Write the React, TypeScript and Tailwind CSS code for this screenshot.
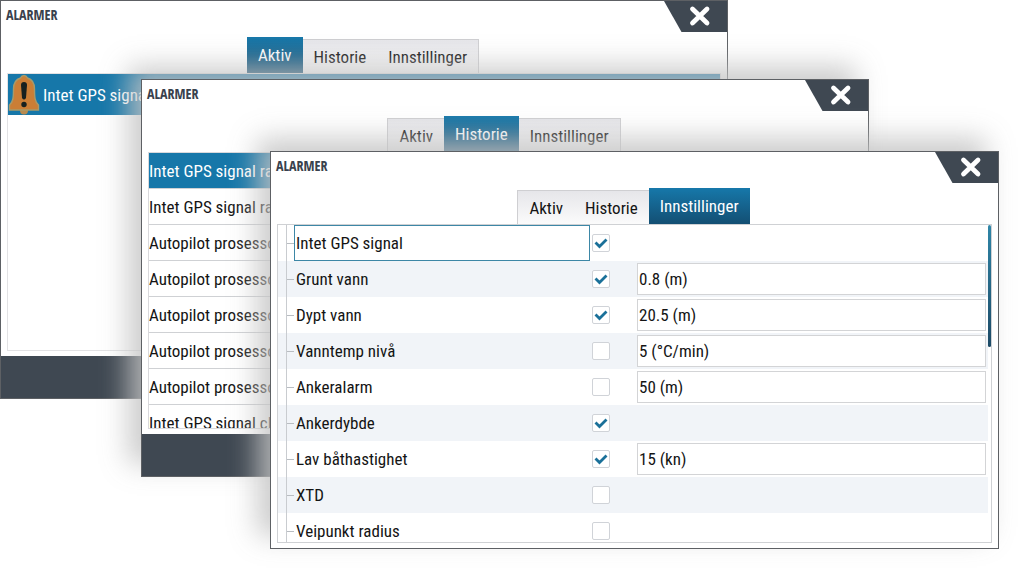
import { useId, useState, type ReactNode } from "react";

type TabName = "Aktiv" | "Historie" | "Innstillinger";
const TABS: TabName[] = ["Aktiv", "Historie", "Innstillinger"];

type Setting = { name: string; on: boolean; value?: string };

const SETTINGS: Setting[] = [
  { name: "Intet GPS signal", on: true },
  { name: "Grunt vann", on: true, value: "0.8 (m)" },
  { name: "Dypt vann", on: true, value: "20.5 (m)" },
  { name: "Vanntemp nivå", on: false, value: "5 (°C/min)" },
  { name: "Ankeralarm", on: false, value: "50 (m)" },
  { name: "Ankerdybde", on: true },
  { name: "Lav båthastighet", on: true, value: "15 (kn)" },
  { name: "XTD", on: false },
  { name: "Veipunkt radius", on: false },
];

const HISTORY = [
  "Intet GPS signal ra",
  "Intet GPS signal ra",
  "Autopilot prosesso",
  "Autopilot prosesso",
  "Autopilot prosesso",
  "Autopilot prosesso",
  "Autopilot prosesso",
  "Intet GPS signal cl",
];

function Tabs({ active }: { active: TabName }) {
  return (
    <div role="tablist" className="flex items-end justify-center pr-0.5">
      {TABS.map((tab) => (
        <button
          key={tab}
          type="button"
          role="tab"
          aria-selected={tab === active}
          className={
            tab === active
              ? "h-9 bg-linear-to-b from-[#1678aa] to-[#134f73] px-[11px] text-white"
              : "h-[34px] border-t border-[#cfcfd2] bg-linear-to-b from-[#e6e6ea] to-[#fbfbfb] px-[11px] first:border-l last:border-r"
          }
        >
          {tab}
        </button>
      ))}
    </div>
  );
}

function AlarmWindow({
  active,
  className,
  footer,
  children,
}: {
  active: TabName;
  className: string;
  footer?: boolean;
  children: ReactNode;
}) {
  return (
    <section className={`absolute border border-[#5d6064] bg-white ${className}`}>
      <header className="flex items-start justify-between pl-[5px]">
        <h2 className="pt-1.5 font-['Open_Sans_Condensed','Roboto_Condensed',sans-serif] text-[14px] leading-4 font-bold text-[#39414d]">
          ALARMER
        </h2>
        <button type="button" aria-label="Lukk" className="block">
          <svg width="63" height="31" viewBox="0 0 63 31" className="block">
            <path d="M0 0H63V31H17.500Z" fill="#3f4852" />
            <path
              d="M28.500 8L43 22M43 8L28.500 22"
              stroke="#fff"
              strokeWidth="4.800"
              strokeLinecap="round"
            />
          </svg>
        </button>
      </header>
      <div className="px-1.5 py-[5px]">
        <Tabs active={active} />
        {children}
      </div>
      {footer && <footer className="h-[42px] bg-[#3f4852]" />}
    </section>
  );
}

function BellIcon() {
  return (
    <svg width="32" height="41" viewBox="0 0 32 41" aria-hidden="true" className="block">
      <circle cx="16" cy="36.500" r="4" fill="#b98a4e" />
      <path
        d="M16 1.500C13.500 1.500 13 3 12.500 4C7.500 5.500 5.500 10 5.500 15C5.500 24 5 28 1.500 31V36H30.500V31C27 28 26.500 24 26.500 15C26.500 10 24.500 5.500 19.500 4C19 3 18.500 1.500 16 1.500Z"
        fill="#cb7e36"
        stroke="#a89a6a"
        strokeWidth="1.400"
      />
      <path d="M13 11Q13 8 16 8T19 11L18 24Q16 27 14 24Z" fill="#17201f" />
      <circle cx="16" cy="30.500" r="2.700" fill="#17201f" />
    </svg>
  );
}

function SettingRow({ setting, focused }: { setting: Setting; focused: boolean }) {
  const id = useId();
  const [on, setOn] = useState(setting.on);
  const [value, setValue] = useState(setting.value ?? "");
  return (
    <li className="flex h-9 items-center pr-0.5 pl-2 even:bg-[#f1f4f8]">
      <span className="flex h-full w-2 shrink-0 items-center border-l border-[#c9ccd0]">
        <span className="h-px w-full bg-[#b9bdc2]" />
      </span>
      <label
        htmlFor={id}
        className={
          focused
            ? "flex h-full w-[296px] items-center border border-[#3d87a6] bg-white pl-px"
            : "flex h-full w-[296px] items-center pl-0.5"
        }
      >
        {setting.name}
      </label>
      <span className="mr-[27px] ml-0.5 grid size-[18px] shrink-0">
        <input
          id={id}
          type="checkbox"
          checked={on}
          onChange={(e) => setOn(e.target.checked)}
          className="peer col-start-1 row-start-1 size-[18px] appearance-none rounded-xs border border-[#d0d3d8] bg-white"
        />
        <svg
          viewBox="0 0 18 18"
          className="pointer-events-none invisible col-start-1 row-start-1 size-[18px] peer-checked:visible"
        >
          <path d="M3.500 8.500L7.500 12.500L14.500 5.500" fill="none" stroke="#1a7099" strokeWidth="2.800" />
        </svg>
      </span>
      {setting.value !== undefined && (
        <input
          type="text"
          aria-label={setting.name}
          value={value}
          onChange={(e) => setValue(e.target.value)}
          className="h-8 min-w-0 flex-1 border border-[#d3d4d6] bg-white px-px"
        />
      )}
    </li>
  );
}

export default function App() {
  return (
    <main className="relative min-h-screen overflow-hidden bg-white font-['Roboto_Condensed','Noto_Sans',sans-serif] text-[17px] leading-6 text-[#141414]">
      <AlarmWindow active="Aktiv" footer className="top-0 right-[296px] left-0">
        <ul className="h-[278px] border border-[#e2e2e4]">
          <li className="flex h-[41px] items-center gap-[3px] bg-[#1677a9] text-white">
            <BellIcon />
            Intet GPS signal
          </li>
        </ul>
      </AlarmWindow>

      <AlarmWindow
        active="Historie"
        footer
        className="top-[79px] right-[155px] left-[141px] shadow-[-13px_-13px_26px_rgba(195,195,195,0.85)]"
      >
        <ul className="h-[277px] overflow-hidden border border-[#d9d9dc]">
          {HISTORY.map((text, i) => (
            <li
              key={i}
              className="flex h-9 items-center border-b border-[#cfd1d4] whitespace-nowrap first:bg-[#1677a9] first:text-white"
            >
              {text}
            </li>
          ))}
        </ul>
      </AlarmWindow>

      <AlarmWindow
        active="Innstillinger"
        className="top-[151px] right-[25px] left-[270px] shadow-[-13px_-13px_26px_rgba(195,195,195,0.85)]"
      >
        <div className="flex h-[319px] overflow-hidden border border-[#cfd1d4]">
          <ul className="min-w-0 flex-1">
            {SETTINGS.map((setting, i) => (
              <SettingRow key={setting.name} setting={setting} focused={i === 0} />
            ))}
          </ul>
          <div className="h-[122px] w-[3px] rounded-full bg-linear-to-b from-[#2f86a8] to-[#1d4a66]" />
        </div>
      </AlarmWindow>
    </main>
  );
}
